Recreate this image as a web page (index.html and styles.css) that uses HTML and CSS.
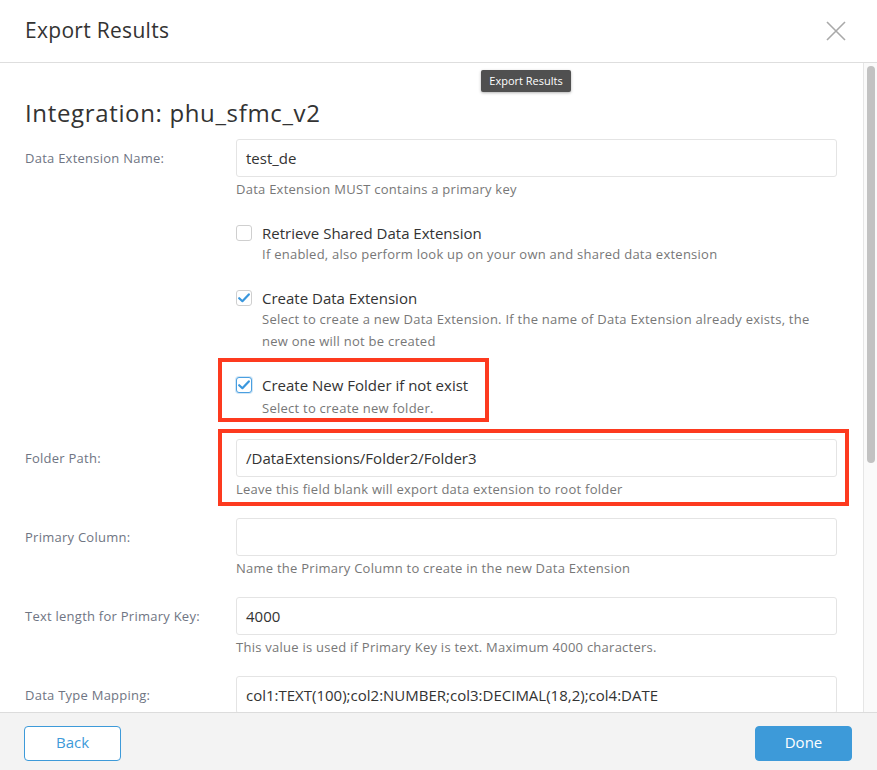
FILE: index.html
```html
<!DOCTYPE html>
<html>
<head>
<meta charset="utf-8">
<link rel="stylesheet" href="styles.css">
</head>
<body>
<div class="modal">
  <header class="modal-header">
    <h1 class="modal-title">Export Results</h1>
    <button class="close-btn" aria-label="Close">
      <svg width="20" height="20" viewBox="0 0 20 20"><path d="M1 1L19 19M19 1L1 19" stroke="#a9a9a9" stroke-width="1.6" fill="none"/></svg>
    </button>
  </header>
  <div class="tooltip">Export Results</div>
  <div class="body-wrap">
  <main class="modal-body">
    <h2 class="integration">Integration: phu_sfmc_v2</h2>

    <div class="row">
      <label class="row-label">Data Extension Name:</label>
      <div class="control">
        <div class="input">test_de</div>
        <div class="help">Data Extension MUST contains a primary key</div>
      </div>
    </div>

    <div class="row checks">
      <div class="row-label"></div>
      <div class="control">
        <div class="check-item">
          <div class="check-line"><span class="box"></span><span class="check-label">Retrieve Shared Data Extension</span></div>
          <div class="check-desc">If enabled, also perform look up on your own and shared data extension</div>
        </div>
        <div class="check-item">
          <div class="check-line"><span class="box checked"><svg width="12" height="10" viewBox="0 0 12 10"><path d="M1.2 5.2L4.4 8.2L10.8 1.4" stroke="#3a97dd" stroke-width="2.2" fill="none" stroke-linecap="round" stroke-linejoin="round"/></svg></span><span class="check-label">Create Data Extension</span></div>
          <div class="check-desc">Select to create a new Data Extension. If the name of Data Extension already exists, the new one will not be created</div>
        </div>
        <div class="check-item highlighted">
          <div class="check-line"><span class="box checked focus"><svg width="12" height="10" viewBox="0 0 12 10"><path d="M1.2 5.2L4.4 8.2L10.8 1.4" stroke="#3a97dd" stroke-width="2.2" fill="none" stroke-linecap="round" stroke-linejoin="round"/></svg></span><span class="check-label">Create New Folder if not exist</span></div>
          <div class="check-desc">Select to create new folder.</div>
          <div class="annot annot-check"></div>
        </div>
      </div>
    </div>

    <div class="row">
      <label class="row-label">Folder Path:</label>
      <div class="control">
        <div class="input">/DataExtensions/Folder2/Folder3</div>
        <div class="help">Leave this field blank will export data extension to root folder</div>
        <div class="annot annot-folder"></div>
      </div>
    </div>

    <div class="row">
      <label class="row-label">Primary Column:</label>
      <div class="control">
        <div class="input"></div>
        <div class="help">Name the Primary Column to create in the new Data Extension</div>
      </div>
    </div>

    <div class="row">
      <label class="row-label">Text length for Primary Key:</label>
      <div class="control">
        <div class="input">4000</div>
        <div class="help">This value is used if Primary Key is text. Maximum 4000 characters.</div>
      </div>
    </div>

    <div class="row">
      <label class="row-label">Data Type Mapping:</label>
      <div class="control">
        <div class="input">col1:TEXT(100);col2:NUMBER;col3:DECIMAL(18,2);col4:DATE</div>
      </div>
    </div>
  </main>
  <div class="scrollbar"><div class="thumb"></div></div>
  </div>
  <footer class="modal-footer">
    <button class="btn btn-outline">Back</button>
    <button class="btn btn-primary">Done</button>
  </footer>
</div>
</body>
</html>
```
FILE: styles.css
```css
* { box-sizing: border-box; }
html, body { margin: 0; padding: 0; }
body {
  font-family: "Open Sans", "Lato", sans-serif;
  color: #333;
  background: #fff;
}
.modal {
  position: relative;
  width: 877px;
  height: 770px;
  display: flex;
  flex-direction: column;
  background: #fff;
  overflow: hidden;
}
.modal-header {
  height: 63px;
  flex: none;
  display: flex;
  align-items: center;
  justify-content: space-between;
  padding: 0 31px 0 25px;
  border-bottom: 1px solid #dedede;
}
.modal-title {
  margin: 0;
  font-size: 21px;
  font-weight: 400;
  letter-spacing: 0.3px;
  color: #333;
  line-height: 24px;
  padding-bottom: 2px;
}
.close-btn {
  background: none;
  border: 0;
  padding: 0;
  width: 20px;
  height: 20px;
  display: flex;
}
.tooltip {
  position: absolute;
  left: 481px;
  top: 70px;
  width: 90px;
  height: 22px;
  background: #505050;
  color: #fff;
  font-size: 11px;
  line-height: 22px;
  text-align: center;
  border-radius: 2px;
  box-shadow: 0 1px 3px rgba(0,0,0,0.3);
  z-index: 3;
}
.body-wrap {
  flex: 1;
  display: flex;
  min-height: 0;
}
.modal-body {
  flex: 1;
  overflow: hidden;
  padding: 34px 26px 0 25px;
}
.scrollbar {
  width: 14px;
  flex: none;
  background: #fafafa;
  border-left: 1px solid #e6e6e6;
  padding: 3px 2px 0 3px;
}
.thumb {
  height: 397px;
  background: #c2c2c2;
  border-radius: 4px;
}
.integration {
  margin: 0 0 10px;
  font-size: 24px;
  font-weight: 400;
  letter-spacing: 0.65px;
  line-height: 32px;
  color: #333;
}
.row {
  display: grid;
  grid-template-columns: 211px 601px;
  margin-bottom: 19px;
}
.row-label {
  font-size: 13px;
  letter-spacing: 0.25px;
  color: #6f7583;
  line-height: 38px;
}
.control { position: relative; }
.input {
  height: 38px;
  border: 1px solid #e4e4e4;
  border-radius: 3px;
  padding: 0 9px;
  font-size: 15px;
  line-height: 36px;
  color: #333;
  background: #fff;
  white-space: nowrap;
  overflow: hidden;
}
.help {
  font-size: 13px;
  letter-spacing: 0.25px;
  color: #777;
  line-height: 20px;
  margin-top: 2px;
}
.checks { margin-top: 22px; margin-bottom: 20px; }
.check-item { position: relative; margin-bottom: 21px; }
.check-item:last-child { margin-bottom: 0; }
.check-item:last-child .check-desc { margin-top: 2px; }
.check-line {
  display: flex;
  align-items: center;
  height: 22px;
  padding-top: 1px;
}
.box {
  width: 16px;
  height: 16px;
  border: 1px solid #cfcfcf;
  border-radius: 3px;
  background: #fff;
  margin-right: 10px;
  display: flex;
  align-items: center;
  justify-content: center;
  flex: none;
}
.box.focus { border-color: #4a9fe0; box-shadow: 0 0 0 1px rgba(74,159,224,0.25); }
.check-label { font-size: 15px; color: #333; }
.check-desc {
  font-size: 13px;
  letter-spacing: 0.25px;
  color: #777;
  line-height: 22px;
  padding-left: 26px;
  padding-right: 20px;
}
.annot {
  position: absolute;
  border: 4px solid #fd3a1f;
  pointer-events: none;
}
.annot-check { left: -18px; top: -15px; width: 271px; height: 64px; }
.annot-folder { left: -18px; top: -10px; width: 631px; height: 77px; }
.modal-footer {
  height: 58px;
  flex: none;
  background: #f3f3f3;
  border-top: 1px solid #dcdcdc;
  display: flex;
  align-items: flex-start;
  justify-content: space-between;
  padding: 13px 25px 0 24px;
}
.btn {
  width: 97px;
  height: 35px;
  border-radius: 4px;
  font-family: inherit;
  font-size: 15px;
  line-height: 31px;
  padding: 0 0 2px;
  cursor: pointer;
}
.btn-outline {
  background: #fff;
  border: 1px solid #3d9ad9;
  color: #3d9ad9;
}
.btn-primary {
  background: #3d9ad9;
  border: 1px solid #3d9ad9;
  color: #fff;
}
```
